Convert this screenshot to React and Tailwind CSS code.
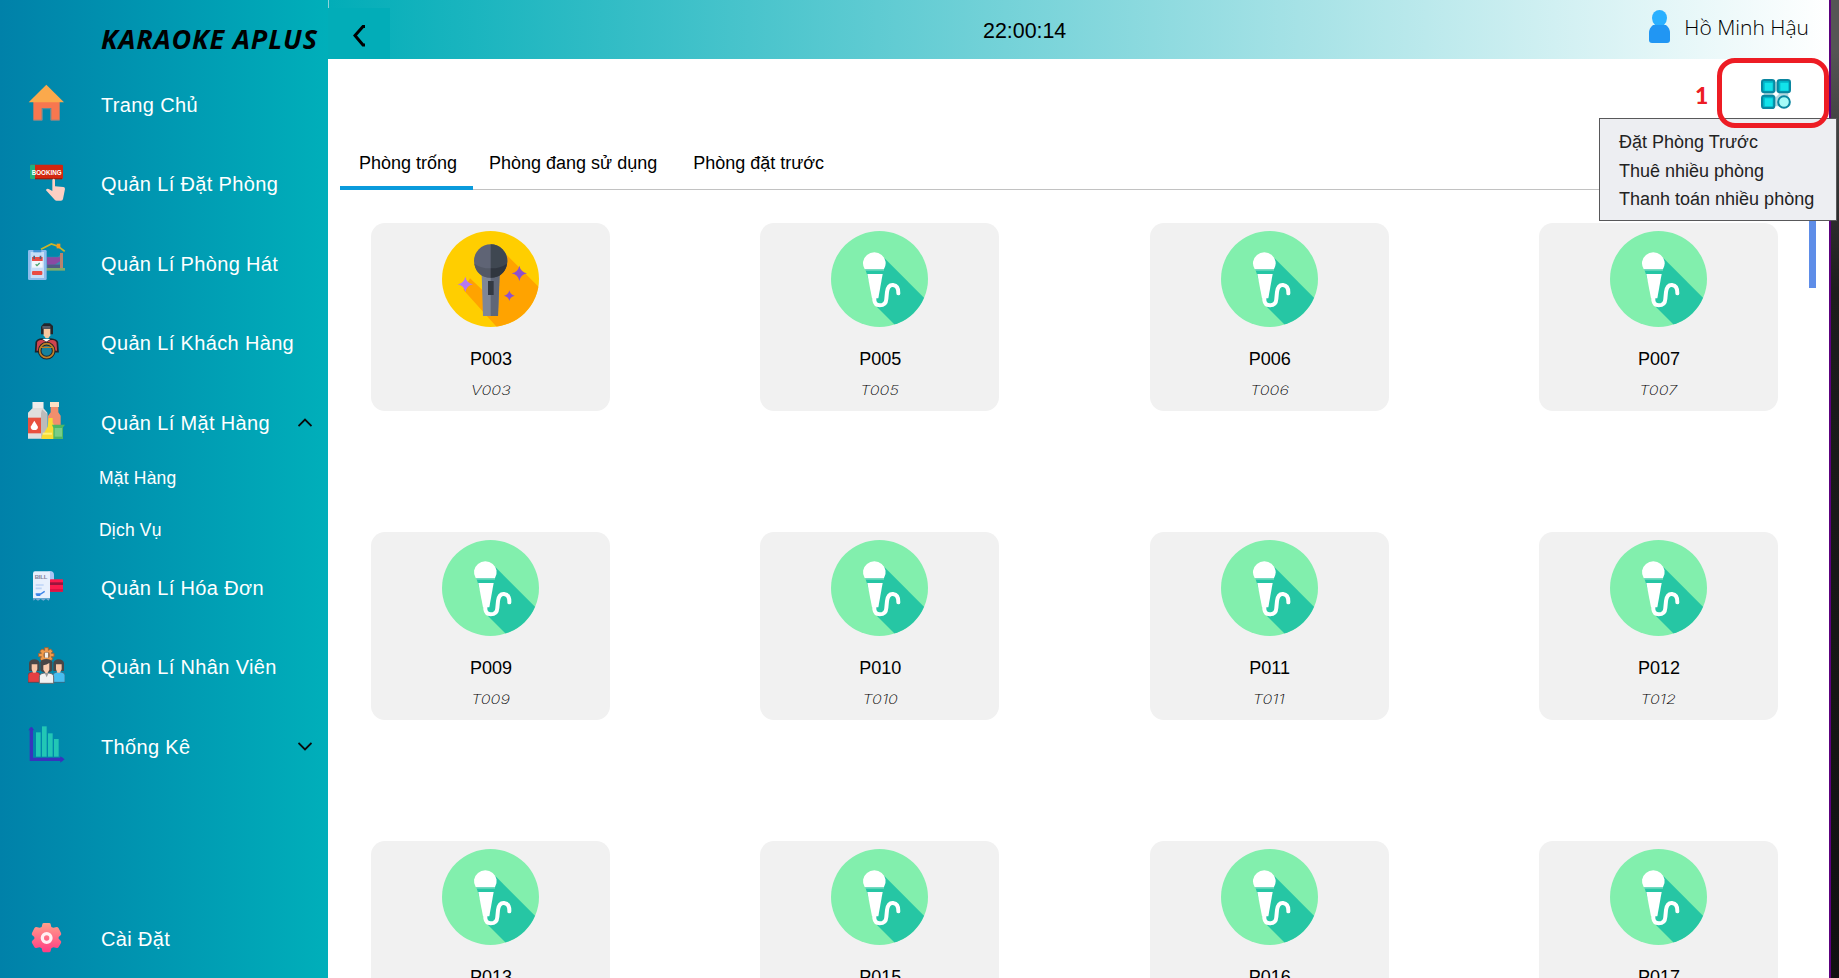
const sans = "font-['Liberation_Sans',sans-serif]";

function HomeIcon() {
  return (
    <svg viewBox="0 0 111 111" className="size-full">
      <path d="M16 48h79v60H68V74H43v34H16z" fill="#f8774f" />
      <path d="M16 107h27v4H16zM68 107h27v4H68z" fill="#6d8790" />
      <path d="M55 2 108 55H2z" fill="#fba94c" />
      <path d="M43 108V74h25v34" fill="none" stroke="#5b8c97" strokeWidth="4" />
    </svg>
  );
}

function BookingIcon() {
  return (
    <svg viewBox="0 0 111 111" className="size-full">
      <rect x="6" y="2" width="99" height="43" rx="4" fill="#d3260f" />
      <path d="M10 2h11v43H10q-4 0-4-4V6q0-4 4-4z" fill="#22b07d" />
      <path d="M21 42h81v4H21z" fill="#a31d0c" />
      <text x="11" y="33" fontSize="21" fontWeight="700" textLength="90" lengthAdjust="spacingAndGlyphs" fill="#fff" fontFamily="Liberation Sans">BOOKING</text>
      <path d="M73 47q4-5 8 0v20l25 2q5 0 5 6l-6 30q-1 5-6 5H85q-4 0-7-5L54 79q0-6 8-4l11 6z" fill="#fdcfc3" />
    </svg>
  );
}

function RoomIcon() {
  return (
    <svg viewBox="0 0 111 111" className="size-full">
      <path d="M39 19 70 3l20 7 20 15" fill="none" stroke="#c9b52a" strokeWidth="5" />
      <rect x="86" y="2" width="11" height="14" fill="#f59a1c" />
      <path d="M56 41h34l10-9v46H56z" fill="#3f86ae" />
      <path d="M56 43h40v12l-16 10H56z" fill="#8b4aa3" />
      <path d="M58 65h38v10H58z" fill="#4f5c85" />
      <rect x="96" y="30" width="9" height="48" fill="#b8836e" />
      <rect x="50" y="75" width="61" height="8" fill="#7cab6c" />
      <rect x="0" y="21" width="56" height="90" rx="4" fill="#8dbcec" />
      <rect x="8" y="27" width="40" height="78" fill="#c6ddf6" />
      <rect x="16" y="21" width="24" height="7" fill="#4093d6" />
      <rect x="12" y="42" width="32" height="32" fill="#f2f6fa" />
      <rect x="12" y="42" width="32" height="12" fill="#e94b43" />
      <path d="M16 38h5v10h-5zM35 38h5v10h-5z" fill="#51627e" />
      <path d="m23 64 4 4 8-8" stroke="#49a36c" strokeWidth="4" fill="none" />
      <rect x="12" y="84" width="31" height="12" rx="3" fill="#e94b43" />
    </svg>
  );
}

function CustomerIcon() {
  return (
    <svg viewBox="0 0 111 111" className="size-full">
      <path d="M41 8 48 1h18l9 8v25H39V12z" fill="#23262c" />
      <path d="M47 17h20v20l-6 9h-8l-6-9z" fill="#f8c9a0" />
      <path d="M43 9h24v8H43z" fill="#565a66" />
      <path d="M25 57q3-8 18-9l12 6 13-6q17 1 20 10l2 28H23z" fill="#d0444e" stroke="#20232a" strokeWidth="5" />
      <path d="M43 48h24l-12 8z" fill="#fff" />
      <path d="M38 62h36v16H38z" fill="#d0444e" />
      <circle cx="56" cy="83" r="21" fill="#15829d" stroke="#20232a" strokeWidth="11" />
      <circle cx="56" cy="83" r="21" fill="none" stroke="#c08125" strokeWidth="5" />
      <path d="M36 73h40" stroke="#c08125" strokeWidth="4" />
    </svg>
  );
}

function GoodsIcon() {
  return (
    <svg viewBox="0 0 111 111" className="size-full">
      <path d="M14 0h32v18l12 14v78H0V32l14-14z" fill="#e0dedd" />
      <path d="M14 0h32v18H14z" fill="#eeeceb" />
      <path d="M42 22 58 36v74H39V34z" fill="#bdbbba" />
      <rect x="0" y="47" width="39" height="47" fill="#e8503f" />
      <path d="M19 56 30 74q0 10-11 10T8 74z" fill="#fff" />
      <path d="M66 0h27v15H66z" fill="#fbe0c4" />
      <path d="M68 15h23v16l7 10v39H60V42l8-11z" fill="#f28e6d" />
      <path d="M62 48h12v14l9 14v35H41q-2-10 6-16l12-21z" fill="#f8dc33" />
      <path d="M44 92h28v6H44z" fill="#fff07a" />
      <path d="M72 68h39l-6 8v35H76V78z" fill="#4db765" />
      <path d="M80 78h22v26H80z" fill="#78cd87" />
    </svg>
  );
}

function BillIcon() {
  return (
    <svg viewBox="0 0 111 111" className="size-full">
      <path d="M62 12q16-2 16 12v20H62z" fill="#a9c5f4" />
      <path d="M16 13h47q3 0 3 6v75H15V20q0-7 6-7z" fill="#e8f0fd" />
      <path d="M15 94h51l-4 7-8-5-8 5-8-5-8 5-8-5-5 5z" fill="#7aa9d6" />
      <text x="20" y="37" fontSize="18" fontWeight="700" textLength="38" fill="#83809a" fontFamily="Liberation Sans">BILL</text>
      <path d="M23 54h24M23 64h18" stroke="#bcd3f7" strokeWidth="5" />
      <path d="M23 81h15l12-8M25 85h12" stroke="#3a83e8" strokeWidth="4" fill="none" />
      <rect x="66" y="37" width="39" height="37" rx="2" fill="#fb1b4c" />
      <rect x="66" y="46" width="39" height="8" fill="#99153d" />
      <path d="M66 66h39v8H66z" fill="#dd1242" />
    </svg>
  );
}

function StaffIcon() {
  return (
    <svg viewBox="0 0 111 111" className="size-full">
      <g fill="#f29a4b" stroke="#9c6538" strokeWidth="3">
        <path d="M50 2h11v8l7-4 6 7-4 6h8v10h-8l4 7-6 6H42l-6-6 4-7h-8V19h8l-4-6 6-7 8 4z" />
      </g>
      <circle cx="56" cy="24" r="10" fill="#a07452" />
      <rect x="51" y="17" width="9" height="15" fill="#f4f1ee" />
      <path d="M0 84q0-7 12-9h14q10 2 10 9v22H0z" fill="#e33f42" stroke="#50404a" strokeWidth="2" />
      <path d="M75 84q0-7 12-9h12q12 2 12 9v22H75z" fill="#46bdf0" stroke="#3f5868" strokeWidth="2" />
      <path d="M3 72V48q3-11 16-11t16 11v24z" fill="#4a4747" />
      <path d="M76 72V48q3-11 16-11t16 11v24z" fill="#4a4747" />
      <path d="M11 52h17v15l-5 10h-8l-4-10zM84 52h17v15l-5 10h-8l-4-10z" fill="#fac7a7" />
      <path d="M34 90q0-10 14-12h15q14 2 14 12v19H34z" fill="#f1f1f1" stroke="#66696e" strokeWidth="3" />
      <path d="M37 70V46q4-10 18-10t18 10v24q-6 8-18 8t-18-8z" fill="#494646" />
      <path d="M46 55q10-2 18-7v20l-6 11h-5l-7-11z" fill="#fbcdb0" />
      <path d="M50 78h12l-6 13z" fill="#9b9b9b" />
    </svg>
  );
}

function ChartIcon() {
  return (
    <svg viewBox="0 0 111 111" className="size-full">
      <g fill="#22c7b5">
        <rect x="24" y="19" width="14" height="73" />
        <rect x="42" y="1" width="14" height="91" />
        <rect x="60" y="22" width="14" height="70" />
        <rect x="78" y="39" width="14" height="53" />
      </g>
      <path d="M5 5v100h100V95H15V5z" fill="#3834bd" />
      <path d="m1 13 9-11 9 11zM97 91l13 9-13 10z" fill="#3834bd" />
    </svg>
  );
}

function SettingsIcon() {
  return (
    <svg viewBox="0 0 111 111" className="size-full">
      <defs>
        <linearGradient id="gear" x1="0" y1="0" x2="0" y2="1">
          <stop offset="0" stopColor="#ffa08a" />
          <stop offset="1" stopColor="#ff3c84" />
        </linearGradient>
      </defs>
      <path d="M43 16q0-4 5-4h15q5 0 5 4l2 8 6 2 10-2q4 0 6 4l7 14q2 4-1 7l-6 5v5l6 6q3 3 1 7l-7 12q-2 4-6 3l-10-2-6 3-2 8q-1 4-5 4H48q-4 0-5-4l-2-8-6-3-10 2q-4 1-6-3l-7-12q-2-4 1-7l6-6v-5l-6-5q-3-3-1-7l7-14q2-4 6-4l10 2 6-2z" fill="url(#gear)" />
      <circle cx="56" cy="57" r="13" fill="none" stroke="#fff0f3" strokeWidth="10" />
    </svg>
  );
}

function Chevron({ up }) {
  return (
    <svg viewBox="0 0 14 9" className="mr-[16.5px] ml-auto h-[9px] w-[14px]" fill="none" stroke="#0a0a0a" strokeWidth="1.8">
      <path d={up ? "M.5 8 7 1.5 13.5 8" : "M.5 1 7 7.5 13.5 1"} />
    </svg>
  );
}

function NavItem({ icon: Icon, label, chevron }) {
  return (
    <div className="flex h-[79.5px] shrink-0 items-center pl-7">
      <div className="-mt-1 size-[37px] shrink-0">
        <Icon />
      </div>
      <span className="ml-9 text-[20px] tracking-[0.35px] whitespace-nowrap text-white">{label}</span>
      {chevron && <Chevron up={chevron === "up"} />}
    </div>
  );
}

function GreenMic() {
  return (
    <svg viewBox="0 0 291 288" className="h-24 w-[97px]">
      <defs>
        <clipPath id="green-disc">
          <ellipse cx="145.500" cy="144" rx="145.500" ry="144" />
        </clipPath>
      </defs>
      <ellipse cx="145.500" cy="144" rx="145.500" ry="144" fill="#82efad" />
      <path d="M160 81 300 221V320H230L138 228 104 118z" fill="#26c6a4" clipPath="url(#green-disc)" />
      <path d="M101 114A34 33 0 1 1 159 114z" fill="#fff" />
      <path d="M103 114h56v5h-56z" fill="#74dcc0" />
      <path d="M109 129h46l-13 73-19 0z" fill="#fff" />
      <path d="M130 200v8q2 15 16 15 19 0 20-19l2-21q3-22 18-21 17 2 16 25" fill="none" stroke="#fff" strokeWidth="12" strokeLinecap="round" />
    </svg>
  );
}

function GoldMic() {
  const star = "M0-23Q4-4 23 0 4 4 0 23-4 4-23 0-4-4 0-23z";
  return (
    <svg viewBox="0 0 291 288" className="h-24 w-[97px]">
      <defs>
        <clipPath id="gold-disc">
          <ellipse cx="145.500" cy="144" rx="145.500" ry="144" />
        </clipPath>
      </defs>
      <ellipse cx="145.500" cy="144" rx="145.500" ry="144" fill="#ffce00" />
      <path d="M180 58 310 188V310H184L64 176 84 142 122 178V110z" fill="#ffa300" clipPath="url(#gold-disc)" />
      <path d="M119 130h54l-5 125h-45z" fill="#7f8696" />
      <path d="M146 130h27l-5 125h-22z" fill="#5f6677" />
      <rect x="138" y="150" width="17" height="42" fill="#333943" />
      <circle cx="146" cy="90" r="50" fill="#5f6475" />
      <path d="M146 40a50 50 0 0 1 0 100z" fill="#3f4751" />
      <path d="M97 98q22 15 49 14v28q-42-1-49-42z" fill="#535866" />
      <path d="M195 98q-22 15-49 14v28q42-1 49-42z" fill="#30363f" />
      <path d={star} transform="translate(70 160)" fill="#b578f2" />
      <path d={star} transform="translate(232 127)" fill="#8d4fd0" />
      <path d={star} transform="translate(202 194) scale(.7)" fill="#8d4fd0" />
    </svg>
  );
}

function RoomCard({ id, type, gold }) {
  return (
    <div className="flex h-[188px] w-[239px] flex-col items-center rounded-[14px] bg-[#f1f1f1] pt-2">
      {gold ? <GoldMic /> : <GreenMic />}
      <div className="mt-[21px] ml-px text-[18px] leading-[22px] text-black">{id}</div>
      <div className="mt-[10px] scale-x-[1.25] font-['Inter',sans-serif] text-[13px] leading-5 font-extralight text-black italic">
        {type}
      </div>
    </div>
  );
}

const rooms = [
  ["P003", "V003"], ["P005", "T005"], ["P006", "T006"], ["P007", "T007"],
  ["P009", "T009"], ["P010", "T010"], ["P011", "T011"], ["P012", "T012"],
  ["P013", "T013"], ["P015", "T015"], ["P016", "T016"], ["P017", "T017"],
];

function Sidebar() {
  return (
    <aside className="flex w-[328px] shrink-0 flex-col bg-linear-to-r/srgb from-[#0081a9] to-[#00afba]">
      <h1 className="h-[65px] pt-[22px] pl-[101px] font-['Open_Sans',sans-serif] text-[27px] leading-[34px] font-bold tracking-[0.9px] whitespace-nowrap text-black italic">
        KARAOKE APLUS
      </h1>
      <NavItem icon={HomeIcon} label="Trang Chủ" />
      <NavItem icon={BookingIcon} label="Quản Lí Đặt Phòng" />
      <NavItem icon={RoomIcon} label="Quản Lí Phòng Hát" />
      <NavItem icon={CustomerIcon} label="Quản Lí Khách Hàng" />
      <NavItem icon={GoodsIcon} label="Quản Lí Mặt Hàng" chevron="up" />
      <div className="-mt-[10.5px] -mb-[8px] shrink-0 pl-[99px] text-[17.5px] tracking-[0.2px] text-white">
        <div className="flex h-[52px] items-center">Mặt Hàng</div>
        <div className="flex h-[52px] items-center">Dịch Vụ</div>
      </div>
      <NavItem icon={BillIcon} label="Quản Lí Hóa Đơn" />
      <NavItem icon={StaffIcon} label="Quản Lí Nhân Viên" />
      <NavItem icon={ChartIcon} label="Thống Kê" chevron="down" />
      <div className="mt-auto -mb-px shrink-0">
        <NavItem icon={SettingsIcon} label="Cài Đặt" />
      </div>
    </aside>
  );
}

function Header() {
  return (
    <header className="flex h-[59px] shrink-0 bg-linear-to-r/srgb from-[#02adb8] to-white">
      <div className="h-2 w-px bg-[#8fd3da]" />
      <div className="mt-2 flex h-[51px] w-[61px] items-center bg-[#02adb8]">
        <svg viewBox="0 0 14 22" className="mt-1 ml-6 h-[22px] w-[14px]" fill="none" stroke="#000" strokeWidth="3">
          <path d="M12 1.500H10L2 10.500 10 20H12" />
        </svg>
      </div>
      <div className="ml-[593px] pt-[19px] text-[21.4px] leading-[25px] text-black">22:00:14</div>
      <div className="mr-[20px] ml-auto flex items-start">
        <svg viewBox="0 0 21 33" className="mt-[10px] h-[33px] w-[21px]">
          <path d="M4 15h13q4 3 4 8v7q0 3-3 3H3q-3 0-3-3v-7q0-5 4-8z" fill="#2196f3" />
          <path d="M3 8a7.500 8 0 0 1 15 0q0 4-3 7H6Q3 12 3 8z" fill="#2ab0ff" />
        </svg>
        <span className="mt-[12px] ml-[14px] font-['Open_Sans',sans-serif] text-[21px] leading-[30px] font-light whitespace-nowrap text-black">
          Hồ Minh Hậu
        </span>
      </div>
    </header>
  );
}

function Tabs() {
  return (
    <div className="mt-[80px] ml-3 flex h-[51px] shrink-0 border-b border-[#c2c2c2] text-[18px] whitespace-nowrap text-black">
      <div className="-mb-px w-[133px] border-b-4 border-[#0a9bdc] pt-[11px] pl-[19px]">Phòng trống</div>
      <div className="pt-[11px] pl-[16px]">Phòng đang sử dụng</div>
      <div className="pt-[11px] pl-[36px]">Phòng đặt trước</div>
    </div>
  );
}

function GridIcon() {
  return (
    <svg viewBox="0 0 90 90" className="absolute top-[79px] left-[1761px] size-[30px]">
      <path d="M35 8h20v74H35zM8 35h74v20H8z" fill="#b4d8df" />
      <path d="m45 36 9 9-9 9-9-9z" fill="#fff" />
      <g stroke="#0a86a0" strokeWidth="6">
        <rect x="3" y="3" width="37" height="37" rx="7" fill="#00b3c6" />
        <rect x="50" y="3" width="37" height="37" rx="7" fill="#00b3c6" />
        <rect x="3" y="50" width="37" height="37" rx="7" fill="#00b3c6" />
        <circle cx="69" cy="69" r="17.500" fill="#a5fbf8" />
      </g>
      <path d="M11 11h24v24H11zM58 11h24v24H58zM11 58h24v24H11z" fill="#12e2ea" />
    </svg>
  );
}

export default function App() {
  return (
    <div className={"relative flex h-[978px] w-[1839px] overflow-hidden bg-white " + sans}>
      <Sidebar />
      <main className="flex w-[1501px] shrink-0 flex-col overflow-hidden">
        <Header />
        <Tabs />
        <div className="mt-[33px] flex">
          <div className="ml-[43px] grid w-[1407px] shrink-0 grid-cols-[repeat(4,239px)] justify-between gap-y-[121px]">
            {rooms.map(([id, type], i) => (
              <RoomCard key={id} id={id} type={type} gold={i === 0} />
            ))}
          </div>
          <div className="-mt-1 ml-[31px] h-[69px] w-[7px] bg-[#5e8de8]" />
        </div>
      </main>
      <div className="grow border-l-2 border-[#5c007f] bg-linear-to-b from-[#555] from-5% via-[#1c1c1c] via-30% to-[#101010]" />

      <GridIcon />
      <div className="absolute top-[81px] left-[1695px] font-['Lato',sans-serif] text-[23px] leading-[28px] font-black text-[#ed1c24]">1</div>
      <div className="absolute top-[118px] left-[1599px] h-[103px] w-[238px] border border-[#58585a] bg-[#edeef2] pt-[9px] pl-[19px] text-[18px] leading-[28.5px] whitespace-nowrap text-[#222]">
        <div>Đặt Phòng Trước</div>
        <div>Thuê nhiều phòng</div>
        <div>Thanh toán nhiều phòng</div>
      </div>
      <div className="absolute top-[58px] left-[1717px] h-[70px] w-[112px] rounded-[18px] border-[5px] border-[#ed1c24]" />
    </div>
  );
}
